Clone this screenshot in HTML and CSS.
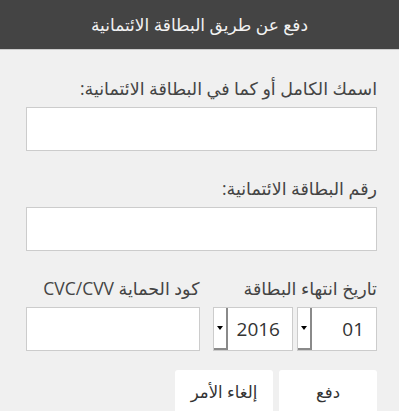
FILE: index.html
```html
<!DOCTYPE html>
<html lang="ar" dir="rtl">
<head>
    <meta charset="UTF-8">
    <title>دفع عن طريق البطاقة الائتمانية</title>
    <link rel="stylesheet" href="styles.css">
</head>
<body>
<div id="payment">
    <div class="title">دفع عن طريق البطاقة الائتمانية</div>
    <form class="form">
        <label class="label">اسمك الكامل أو كما في البطاقة الائتمانية:</label>
        <input class="field" type="text">

        <label class="label">رقم البطاقة الائتمانية:</label>
        <input class="field" type="text">

        <div class="row">
            <div class="col">
                <label class="label">تاريخ انتهاء البطاقة</label>
                <div class="dates">
                    <div class="select">
                        <span class="value">01</span>
                        <span class="drop"><i class="arrow"></i></span>
                    </div>
                    <div class="select">
                        <span class="value">2016</span>
                        <span class="drop"><i class="arrow"></i></span>
                    </div>
                </div>
            </div>
            <div class="col">
                <label class="label">كود الحماية CVC/CVV</label>
                <input class="field" type="text">
            </div>
        </div>

        <div class="buttons">
            <button class="btn" type="button">دفع</button>
            <button class="btn" type="button">إلغاء الأمر</button>
        </div>
    </form>
</div>
</body>
</html>
```

FILE: styles.css
```css
*{
    margin: 0;
    padding: 0;
    box-sizing: border-box;
}
html, body{
    height: 100%;
    overflow: hidden;
}
body{
    background-color: #f0f0f0;
    font-family: "Open Sans", "Noto Sans", "DejaVu Sans", sans-serif;
    color: #444;
}
#payment{
    width: 399px;
}
.title{
    height: 50px;
    line-height: 50px;
    background-color: #444444;
    border-bottom: 1px solid #cccccc;
    color: #f2f2f2;
    font-size: 17px;
    text-align: center;
}
.form{
    padding: 27px 22px 0 26px;
}
.label{
    display: block;
    height: 22px;
    line-height: 22px;
    font-size: 17.5px;
    color: #444;
    margin-bottom: 8px;
}
.field{
    display: block;
    width: 100%;
    height: 44px;
    border: 1px solid #cccccc;
    background-color: #fff;
    margin-bottom: 26px;
    outline: none;
}
.row{
    display: flex;
    gap: 4px;
}
.col{
    flex: 1;
}
.col .field{
    margin-bottom: 0;
}
.dates{
    display: flex;
    gap: 4px;
}
.select{
    display: flex;
    width: 80px;
    height: 44px;
    border: 1px solid #cccccc;
    background-color: #fff;
}
.select .value{
    flex: 1;
    line-height: 42px;
    padding-right: 12px;
    font-size: 19px;
    color: #333;
}
.select .drop{
    width: 14px;
    display: flex;
    align-items: center;
    justify-content: center;
    border-right: 2px solid #8a8a8a;
    border-bottom: 2px solid #8a8a8a;
    background-color: #fff;
}
.arrow{
    width: 0;
    height: 0;
    border-left: 3px solid transparent;
    border-right: 3px solid transparent;
    border-top: 4px solid #000;
}
.buttons{
    display: flex;
    gap: 6px;
    margin-top: 19px;
}
.btn{
    width: 98px;
    height: 50px;
    border: none;
    border-radius: 3px;
    background-color: #fff;
    font-family: inherit;
    font-size: 16.5px;
    color: #333;
    padding-bottom: 8px;
}
```
